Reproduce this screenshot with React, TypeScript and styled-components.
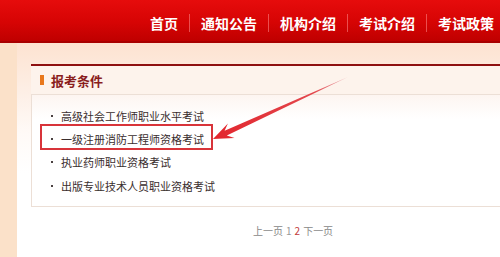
import React from 'react';
import styled, { createGlobalStyle } from 'styled-components';

const GlobalStyle = createGlobalStyle`
  html, body {
    margin: 0;
    padding: 0;
    width: 500px;
    height: 257px;
    overflow: hidden;
    background: #fbe1c9;
    font-family: "Noto Sans CJK SC", "Liberation Sans", sans-serif;
  }
`;

const Page = styled.div`
  position: relative;
  width: 500px;
  height: 257px;
  overflow: hidden;
`;

const HeaderRow = styled.header`
  display: flex;
  height: 43px;
`;

const HeaderStrip = styled.div`
  width: 8px;
  background: linear-gradient(#c80a0a, #a30606);
`;

const HeaderBar = styled.div`
  flex: 1;
  display: flex;
  align-items: center;
  box-sizing: border-box;
  padding: 4px 0 0 139px;
  background: linear-gradient(#e60c0c 0%, #d60404 55%, #bf0000 100%);
  border-bottom: 2px solid #a80000;
`;

const NavItem = styled.a<{ $first?: boolean }>`
  color: #fff;
  text-decoration: none;
  font-weight: 700;
  font-size: 14px;
  line-height: 18px;
  padding: 0 11px;
  white-space: nowrap;
  border-left: ${p => (p.$first ? 'none' : '1px solid rgba(255, 140, 140, 0.55)')};
`;

const Main = styled.main`
  margin-left: 17px;
  height: 214px;
  box-sizing: border-box;
  padding: 21px 0 0 14px;
  background: linear-gradient(#fde3d1 0px, #fdefe6 50px, #fffaf7 90px, #ffffff 130px);
`;

const Panel = styled.section`
  width: 520px;
  border-top: 2px solid #8e1010;
`;

const PanelTitle = styled.div`
  display: flex;
  align-items: center;
  height: 28px;
  padding-left: 9px;
  background: #fdf3ec;
  color: #8a1d1d;
  font-size: 13px;
  font-weight: 700;

  &::before {
    content: '';
    width: 4px;
    height: 10px;
    margin-right: 7px;
    background: #e8781c;
  }
`;

const List = styled.ul`
  margin: 0;
  list-style: none;
  padding: 9px 0 8px 19px;
  border: 1px solid #ecdfd6;
  background: linear-gradient(#fdf5f1 0px, #ffffff 24px);
`;

const ListItem = styled.li`
  display: flex;
  align-items: center;
  height: 23.4px;
  font-size: 11px;
  color: #3a2e2e;

  &::before {
    content: '';
    width: 2px;
    height: 2px;
    margin-right: 8px;
    background: #4a4040;
  }
`;

const Pager = styled.div`
  padding: 16px 0 0 222px;
  font-size: 10px;
  color: #888;
  display: flex;
  gap: 3px;
`;

const PageNum = styled.span<{ $current?: boolean }>`
  color: ${p => (p.$current ? '#c23a3a' : '#999')};
`;

const Highlight = styled.div`
  position: absolute;
  left: 40px;
  top: 124px;
  width: 173px;
  height: 26px;
  box-sizing: border-box;
  border: 2px solid #d8343a;
  pointer-events: none;
`;

const ArrowLayer = styled.svg`
  position: absolute;
  left: 0;
  top: 0;
  pointer-events: none;
`;

const navItems = ['首页', '通知公告', '机构介绍', '考试介绍', '考试政策'];

const items = [
  '高级社会工作师职业水平考试',
  '一级注册消防工程师资格考试',
  '执业药师职业资格考试',
  '出版专业技术人员职业资格考试',
];

const Arrow: React.FC = () => (
  <ArrowLayer width="500" height="257" viewBox="0 0 500 257">
    <defs>
      <linearGradient id="shaft" x1="348" y1="77" x2="213" y2="139" gradientUnits="userSpaceOnUse">
        <stop offset="0" stopColor="#eab0b6" />
        <stop offset="0.25" stopColor="#e3474d" />
        <stop offset="1" stopColor="#e2252d" />
      </linearGradient>
    </defs>
    <polygon
      points="213,139 227.9,123.4 224.6,130.8 348,77 226.8,135.6 234.5,137.9"
      fill="url(#shaft)"
    />
  </ArrowLayer>
);

const App: React.FC = () => {
  return (
    <Page>
      <GlobalStyle />
      <HeaderRow>
        <HeaderStrip />
        <HeaderBar>
          {navItems.map((n, i) => (
            <NavItem key={n} $first={i === 0} href="#">
              {n}
            </NavItem>
          ))}
        </HeaderBar>
      </HeaderRow>

      <Main>
        <Panel>
          <PanelTitle>报考条件</PanelTitle>
          <List>
            {items.map(t => (
              <ListItem key={t}>{t}</ListItem>
            ))}
          </List>
        </Panel>
        <Pager>
          <span>上一页</span>
          <PageNum>1</PageNum>
          <PageNum $current>2</PageNum>
          <span>下一页</span>
        </Pager>
      </Main>

      <Highlight />
      <Arrow />
    </Page>
  );
};

export default App;
